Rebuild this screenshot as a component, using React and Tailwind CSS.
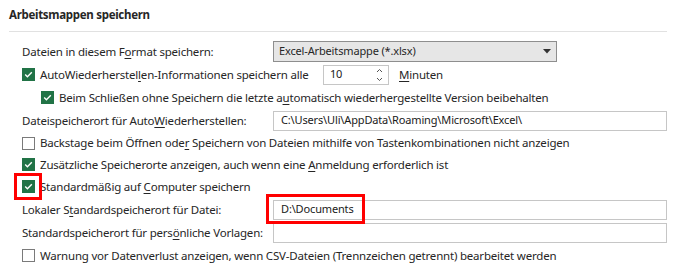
import React from 'react';

const font = { fontFamily: '"Noto Sans", "Segoe UI", sans-serif' };

const U = ({ children }) => (
    <span className="underline decoration-1 underline-offset-[2px]">{children}</span>
);

const Check = ({ checked }) =>
    checked ? (
        <div className="w-[13px] h-[13px] bg-[#217346] flex items-center justify-center shrink-0">
            <svg width="13" height="13" viewBox="0 0 13 13">
                <path d="M3.2 6.6 L5.4 8.7 L9.8 4.3" fill="none" stroke="#ffffff" strokeWidth="1.4" />
            </svg>
        </div>
    ) : (
        <div className="w-[13px] h-[13px] border border-[#7a7a7a] bg-white shrink-0"></div>
    );

const CheckRow = ({ h, checked, indent, children }) => (
    <div className={`flex items-center ${h} ${indent ? 'pl-[41px]' : 'pl-[22px]'}`}>
        <Check checked={checked} />
        <span className="ml-[5px] whitespace-nowrap">{children}</span>
    </div>
);

const InputRow = ({ h, label, value }) => (
    <div className={`flex items-center ${h} pl-[22px] pr-[11px]`}>
        <span className="w-[251px] shrink-0 whitespace-nowrap">{label}</span>
        <div className="flex-1 h-[20px] border border-[#c6c6c6] bg-white flex items-center pl-[7px] text-[11px] tracking-[-0.15px] text-[#1a1a1a]">
            {value}
        </div>
    </div>
);

export default function App() {
    return (
        <div
            className="relative w-[678px] h-[271px] bg-white text-[11.5px] tracking-[-0.2px] text-[#262626] overflow-hidden"
            style={font}
        >
            {/* Section header */}
            <div className="ml-[9px] mr-[11px] h-[32px] border-b border-[#e1e1e1] flex items-center pb-[1px]">
                <span className="font-bold text-[11.5px] tracking-[-0.3px] text-[#262626]">Arbeitsmappen speichern</span>
            </div>

            <div className="pt-[8px] flex flex-col">
                {/* Format */}
                <div className="flex items-center h-[23px] pl-[22px]">
                    <span className="w-[251px] shrink-0 whitespace-nowrap">
                        Dateien in diesem F<U>o</U>rmat speichern:
                    </span>
                    <div className="w-[284px] h-[21px] bg-[#e6e6e6] border border-[#8e8e8e] flex items-center justify-between pl-[5px] pr-[5px]">
                        <span className="whitespace-nowrap text-[11px] tracking-[-0.15px]">Excel-Arbeitsmappe (*.xlsx)</span>
                        <svg width="8" height="5" viewBox="0 0 8 5">
                            <path d="M0 0 H8 L4 4.5 Z" fill="#333333" />
                        </svg>
                    </div>
                </div>

                {/* AutoRecover */}
                <div className="flex items-center h-[23px] pl-[22px]">
                    <Check checked />
                    <span className="ml-[5px] w-[283px] shrink-0 whitespace-nowrap">
                        AutoWiederherstel<U>l</U>en-Informationen speichern alle
                    </span>
                    <div className="w-[66px] h-[20px] border border-[#c6c6c6] bg-white flex items-center justify-between pl-[6px] pr-[5px]">
                        <span className="text-[11px] text-[#1a1a1a]">10</span>
                        <svg width="7" height="14" viewBox="0 0 7 14">
                            <path d="M1 4 L3.5 1.5 L6 4" fill="none" stroke="#555555" strokeWidth="1" />
                            <path d="M1 10 L3.5 12.5 L6 10" fill="none" stroke="#555555" strokeWidth="1" />
                        </svg>
                    </div>
                    <span className="ml-[10px]">
                        <U>M</U>inuten
                    </span>
                </div>

                <CheckRow h="h-[23px]" checked indent>
                    Beim Schließen ohne Speichern die letzte a<U>u</U>tomatisch wiederhergestellte Version beibehalten
                </CheckRow>

                <InputRow
                    h="h-[23px]"
                    label={<>Dateispeicherort für Auto<U>W</U>iederherstellen:</>}
                    value="C:\Users\Uli\AppData\Roaming\Microsoft\Excel\"
                />

                <CheckRow h="h-[22px]">
                    Backstage beim Öffnen ode<U>r</U> Speichern von Dateien mithilfe von Tastenkombinationen nicht anzeigen
                </CheckRow>

                <CheckRow h="h-[21px]" checked>
                    Zusätzliche Speicherorte anzeigen, auch wenn eine <U>A</U>nmeldung erforderlich ist
                </CheckRow>

                <CheckRow h="h-[23px]" checked>
                    Standardmäßig auf <U>C</U>omputer speichern
                </CheckRow>

                <InputRow
                    h="h-[23px]"
                    label={<>Lokaler S<U>t</U>andardspeicherort für Datei:</>}
                    value="D:\Documents"
                />

                <InputRow
                    h="h-[24px]"
                    label={<>Standardspeicherort für pers<U>ö</U>nliche Vorlagen:</>}
                    value=""
                />

                <CheckRow h="h-[21px]">
                    Warnung vor Datenverlust anzeigen, wenn CSV-Dateien (Trennzeichen getrennt) bearbeitet werden
                </CheckRow>
            </div>

            {/* Red highlight boxes */}
            <div className="absolute left-[14px] top-[173px] w-[28px] h-[27px] border-[3px] border-[#ff0000]"></div>
            <div className="absolute left-[266px] top-[194px] w-[99px] h-[30px] border-[3px] border-[#ff0000]"></div>
        </div>
    );
}
